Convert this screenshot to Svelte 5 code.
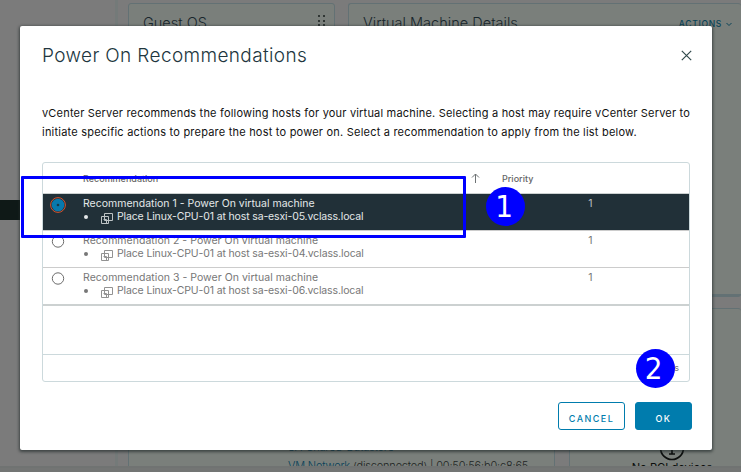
<script>
  const rows = [
    { n: 1, host: 'sa-esxi-05.vclass.local', priority: 1 },
    { n: 2, host: 'sa-esxi-04.vclass.local', priority: 1 },
    { n: 3, host: 'sa-esxi-06.vclass.local', priority: 1 }
  ];
  let selected = $state(1);
</script>

<div class="screen">
  <div class="backdrop">
    <div class="side"><div class="nav"></div></div>
    <main>
      <div class="cards top">
        <section class="guest"><h2>Guest OS</h2>
          <svg width="8" height="14" viewBox="0 0 8 14" fill="#303634"><path d="M0 0h2v2H0zM5 0h2v2H5zM0 5h2v2H0zM5 5h2v2H5zM0 9h2v2H0zM5 9h2v2H5z"/></svg>
        </section>
        <section class="details"><h2>Virtual Machine Details</h2>
          <span class="actions">ACTIONS <svg width="6" height="5" viewBox="0 0 6 5" fill="none" stroke="#0a4458"><path d="M.5 1 3 3.5 5.5 1"/></svg></span>
        </section>
      </div>
      <div class="cards low">
        <section class="related"><p class="link">SA-Shared-Datastore</p><p><span class="link">VM Network</span> (disconnected) | 00:50:56:b0:c8:65</p></section>
        <section class="pci">
          <svg width="26" height="26" viewBox="0 0 26 26" fill="none" stroke="#0c0e0d" stroke-width="1.7"><circle cx="13" cy="13" r="11.5"/><path d="M13 11v8M10 19h6M12 8h2"/></svg>
          <p>No PCI devices</p>
        </section>
      </div>
    </main>
    <div class="bottom"></div>
  </div>

  <div class="modal" role="dialog" aria-label="Power On Recommendations">
    <header>
      <h1>Power On Recommendations</h1>
      <svg width="11" height="11" viewBox="0 0 11 11" fill="none" stroke="#314a4c" stroke-width="1.2"><path d="m.8.8 9.4 9.4M10.2.8.8 10.2"/></svg>
    </header>
    <div class="intro">
      <div class="l1">vCenter Server recommends the following hosts for your virtual machine. Selecting a host may require vCenter Server to</div>
      <div class="l2">initiate specific actions to prepare the host to power on. Select a recommendation to apply from the list below.</div>
    </div>
    <div class="table">
      <div class="thead"><span class="rec">Recommendation</span>
        <svg width="9" height="10" viewBox="0 0 9 10" fill="none" stroke="#6d7274"><path d="M4.5 10V1M1 4.5 4.5 1 8 4.5"/></svg>
        <span class="pri">Priority</span>
      </div>
      {#each rows as row}
        <div class="row" class:on={selected === row.n} role="radio" tabindex="-1" aria-checked={selected === row.n} onclick={() => (selected = row.n)} onkeydown={() => (selected = row.n)}>
          <div class="pick">
            {#if selected === row.n}
              <svg width="16" height="16" viewBox="0 0 16 16"><circle cx="8" cy="8" r="7.4" fill="#213038" stroke="#d9532c"/><circle cx="8" cy="8" r="6.3" fill="#0879ad"/><circle cx="8" cy="8" r="1.3" fill="#17384a"/></svg>
            {:else}
              <svg width="16" height="16" viewBox="0 0 16 16"><circle cx="8" cy="7.5" r="5.7" fill="#fff" stroke="#6c6c6c"/></svg>
            {/if}
          </div>
          <div class="text">
            <div class="t1">Recommendation {row.n} - Power On virtual machine</div>
            <div class="t2"><i></i>
              <svg width="12" height="12" viewBox="0 0 12 12" fill="none" stroke="currentColor"><path d="M3.5.5h8v7h-8zM.5 3.5h7v7h-7zM2.5 6.5h3v4"/></svg>
              <span>Place Linux-CPU-01 at host {row.host}</span>
            </div>
          </div>
          <div class="num">{row.priority}</div>
        </div>
      {/each}
      <div class="space"></div>
      <div class="tfoot">3 items</div>
    </div>
    <footer><button class="cancel">CANCEL</button><button class="ok">OK</button></footer>
  </div>

  <div class="frame"></div>
  <div class="badge one">1</div>
  <div class="badge two">2</div>
</div>

<style>
  :global(body) { margin: 0; overflow: hidden; }
  .screen { position: relative; width: 741px; height: 472px; overflow: hidden; font-family: Inter, "Noto Sans", sans-serif; }
  .screen * { box-sizing: border-box; }
  h1, h2, p { margin: 0; font-weight: 300; }
  svg { display: block; flex: none; }
  .backdrop { display: grid; grid-template: 466px 6px / 118px 1fr; width: 741px; height: 472px; background: #7b7b7b; }
  .side { border-right: 3px solid #747a79; padding-top: 200px; }
  .nav { height: 20px; background: #0f1917; }
  main { overflow: hidden; height: 467px; padding: 3px 0 0 10px; }
  .bottom { grid-column: 1 / 3; background: #737574; border-top: 2px solid #707372; }
  .cards { display: flex; }
  .top { height: 294px; gap: 13px; }
  .low { height: 200px; gap: 14px; margin-top: 11px; }
  section { background: #7a7f7b; border: 1px solid #637174; border-radius: 3px; }
  .guest, .details { display: flex; justify-content: space-between; padding: 10px 8px 0 14px; }
  .guest { width: 207px; }
  .guest svg { margin-top: 1px; }
  .details { flex: 1; border-right: 0; border-bottom-width: 3px; padding-right: 9px; }
  h2 { font-size: 14.5px; line-height: 18px; color: #18262c; letter-spacing: .02px; }
  .actions { display: flex; gap: 4px; font-size: 8.5px; line-height: 18px; letter-spacing: .7px; color: #0a4458; align-items: center; height: 18px; padding-top: 2px; font-weight: 500; }
  .related { width: 427px; padding: 129px 0 0 159px; font-size: 11px; line-height: 19px; letter-spacing: -.18px; color: #1f2524; white-space: nowrap; }
  .link { color: #073f58; }
  .pci { flex: 1; border-right: 0; display: flex; flex-direction: column; align-items: center; padding: 126px 0 0 33px; font-size: 11.2px; line-height: 16px; color: #0c0e0d; }
  .pci p { font-weight: 400; margin-top: -1px; }
  .modal { position: absolute; left: 20px; top: 26px; width: 692px; height: 424px; background: #fff; border-radius: 2px; box-shadow: 0 1px 3px 1px rgba(30,40,40,.65); padding: 19px 22px 0; }
  header { display: flex; justify-content: space-between; height: 22px; align-items: center; }
  header svg { margin: -1px -2px 0 0; }
  h1 { font-size: 19px; line-height: 22px; color: #21363e; letter-spacing: .37px; white-space: nowrap; }
  .intro { margin-top: 37px; font-size: 11px; line-height: 19px; color: #111; white-space: nowrap; height: 58px; }
  .l1 { letter-spacing: .187px; }
  .l2 { letter-spacing: .214px; }
  .table { border: 1px solid #ccd9dc; border-radius: 3px; height: 220px; width: 648px; color: #777; }
  .thead { display: flex; align-items: center; height: 31px; padding-left: 40px; border-bottom: 1px solid #ccd1d1; font-size: 9px; font-weight: 500; color: #666; }
  .rec { width: 388px; }
  .pri { margin-left: 22px; }
  .row { display: flex; height: 37px; border-bottom: 1px solid #ccc; font-size: 10.5px; line-height: 13px; padding-top: 3px; white-space: nowrap; }
  .on { background: #213038; color: #e4e8e9; }
  .on .num { color: #b9bfc2; }
  .row:nth-of-type(4) { height: 38px; border-bottom: 2px solid #ccd1d1; }
  .pick { width: 40px; padding-left: 7px; }
  .text { width: 500px; }
  .t1 { letter-spacing: .03px; }
  .on .t1 { letter-spacing: 0; }
  .t2 { display: flex; align-items: center; height: 13px; letter-spacing: -.14px; }
  i { width: 4px; height: 4px; border-radius: 50%; background: currentColor; margin: 0 13px 0 1px; }
  .t2 svg { margin: 4px 4px 0 0; opacity: .8; }
  .num { width: 15px; text-align: center; }
  .space { height: 49px; border-bottom: 1px solid #ccd9dc; }
  .tfoot { height: 26px; line-height: 26px; text-align: right; padding-right: 10px; font-size: 9px; }
  footer { display: flex; justify-content: flex-end; gap: 10px; margin: 20px -2px 0 0; }
  button { height: 28px; border: 1px solid #007cad; border-radius: 3px; padding: 4px 0 0; font: 500 9px Inter, sans-serif; letter-spacing: 1.45px; }
  .cancel { width: 67px; color: #007cad; background: #fff; }
  .ok { width: 57px; color: #fff; background: #007cad; }
  .frame { position: absolute; left: 21px; top: 176px; width: 445px; height: 62px; border: 3px solid #00f; border-radius: 1px; }
  .badge { position: absolute; width: 39px; height: 39px; border-radius: 50%; background: #00f; color: #fff; font: 31px/39px "DejaVu Sans Condensed", "DejaVu Sans", sans-serif; font-stretch: condensed; text-align: center; }
  .one { left: 486px; top: 187px; padding-right: 3px; }
  .two { left: 636px; top: 349px; padding-right: 4px; }
</style>
